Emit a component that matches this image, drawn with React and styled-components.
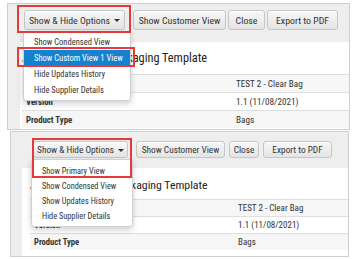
import React from "react";
import styled, { createGlobalStyle } from "styled-components";

const Global = createGlobalStyle`
  html, body { margin: 0; padding: 0; background: #ffffff; }
  body {
    width: 362px; height: 259px; overflow: hidden;
    font-family: "Roboto Condensed", "Liberation Sans", Arial, sans-serif;
    color: #333;
  }
`;

const Page = styled.div`
  display: flex;
  flex-direction: column;
`;

const Shot = styled.div`
  position: relative;
  box-sizing: border-box;
  margin: ${(p) => p.$mt}px 0 0 ${(p) => p.$ml}px;
  width: ${(p) => p.$w}px;
  height: ${(p) => p.$h}px;
  border: 1px solid #cfcfcf;
  background: #eeeeee;
  display: flex;
  flex-direction: column;
  overflow: hidden;
`;

const Toolbar = styled.div`
  height: ${(p) => p.$h}px;
  flex: none;
  display: flex;
  align-items: flex-start;
  padding: ${(p) => p.$pt}px 0 0 ${(p) => p.$pl}px;
  box-sizing: border-box;
`;

const Button = styled.div`
  box-sizing: border-box;
  flex: none;
  width: ${(p) => p.$w}px;
  height: ${(p) => p.$h}px;
  margin-right: ${(p) => p.$gap}px;
  display: flex;
  align-items: center;
  justify-content: center;
  gap: 4px;
  font-size: ${(p) => p.$fs}px;
  color: #333;
  white-space: nowrap;
  border: 1px solid #c6c6c6;
  border-radius: 3px;
  background: linear-gradient(#f7f7f7, #e4e4e4);
  box-shadow: inset 0 1px 0 #fff;
`;

const Caret = styled.span`
  width: 0;
  height: 0;
  border-left: 3px solid transparent;
  border-right: 3px solid transparent;
  border-top: 3.5px solid #333;
  margin-top: 1px;
`;

const Card = styled.div`
  flex: 1;
  margin-left: ${(p) => p.$ml}px;
  background: #ffffff;
  padding: 0 0 0 ${(p) => p.$pl}px;
`;

const Heading = styled.div`
  font-size: ${(p) => p.$fs}px;
  line-height: 16px;
  margin: ${(p) => p.$mt}px 0 ${(p) => p.$mb}px 0;
  color: #222;
  white-space: nowrap;
`;

const Row = styled.div`
  display: grid;
  grid-template-columns: ${(p) => p.$col}px 1fr;
  height: ${(p) => p.$h}px;
  align-items: center;
  border-top: 1px solid #dedede;
  box-sizing: border-box;
  background: ${(p) => (p.$alt ? "#f6f6f6" : "#ffffff")};
`;

const Label = styled.div`
  padding-left: 4px;
  font-size: ${(p) => p.$fs}px;
  font-weight: bold;
  color: #333;
`;

const Value = styled.div`
  padding-left: 4px;
  font-size: ${(p) => p.$fs}px;
  color: #333;
`;

const Menu = styled.div`
  position: absolute;
  left: ${(p) => p.$x}px;
  top: ${(p) => p.$y}px;
  width: ${(p) => p.$w}px;
  box-sizing: border-box;
  padding: ${(p) => p.$pad}px 0;
  background: #ffffff;
  border: 1px solid #d0d0d0;
  border-radius: 3px;
  box-shadow: 0 3px 6px rgba(0, 0, 0, 0.18);
`;

const MenuItem = styled.div`
  height: ${(p) => p.$h}px;
  display: flex;
  align-items: center;
  padding-left: ${(p) => p.$pl}px;
  font-size: ${(p) => p.$fs}px;
  white-space: nowrap;
  color: ${(p) => (p.$active ? "#ffffff" : "#333")};
  background: ${(p) => (p.$active ? "#1482cf" : "transparent")};
`;

const Highlight = styled.div`
  position: absolute;
  left: ${(p) => p.$x}px;
  top: ${(p) => p.$y}px;
  width: ${(p) => p.$w}px;
  height: ${(p) => p.$h}px;
  box-sizing: border-box;
  border: 2px solid #e5393b;
  pointer-events: none;
`;

const buttons = ["Show Customer View", "Close", "Export to PDF"];
const rows = [
  ["Name", "TEST 2 - Clear Bag"],
  ["Version", "1.1 (11/08/2021)"],
  ["Product Type", "Bags"],
];

function Screen({ g, items, activeIndex, boxes }) {
  return (
    <Shot $mt={g.mt} $ml={g.ml} $w={g.w} $h={g.h}>
      <Toolbar $h={g.tbH} $pt={g.tbPt} $pl={g.tbPl}>
        <Button $w={g.btnW[0]} $h={g.btnH} $fs={g.btnFs} $gap={g.firstGap}>
          Show &amp; Hide Options <Caret />
        </Button>
        {buttons.map((b, i) => (
          <Button key={b} $w={g.btnW[i + 1]} $h={g.btnH} $fs={g.btnFs} $gap={g.gap}>
            {b}
          </Button>
        ))}
      </Toolbar>
      <Card $ml={g.cardMl} $pl={g.cardPl}>
        <Heading $fs={g.hFs} $mt={g.hMt} $mb={g.hMb}>
          Article Spec Card Packaging Template
        </Heading>
        {rows.map(([l, v], i) => (
          <Row key={l} $col={g.col} $h={g.rowH} $alt={i !== 1}>
            <Label $fs={g.lFs}>{l}</Label>
            <Value $fs={g.tFs}>{v}</Value>
          </Row>
        ))}
      </Card>
      <Menu $x={g.menuX} $y={g.menuY} $w={g.menuW} $pad={g.menuPad}>
        {items.map((t, i) => (
          <MenuItem key={t} $h={g.itemH} $pl={g.itemPl} $fs={g.mFs} $active={i === activeIndex}>
            {t}
          </MenuItem>
        ))}
      </Menu>
      {boxes.map((b, i) => (
        <Highlight key={i} $x={b[0]} $y={b[1]} $w={b[2]} $h={b[3]} />
      ))}
    </Shot>
  );
}

const topGeo = {
  mt: 3, ml: 7, w: 343, h: 127,
  tbH: 38, tbPt: 6, tbPl: 16,
  btnW: [101, 93, 37, 71], btnH: 20, btnFs: 9.8, firstGap: 8, gap: 2,
  cardMl: 12, cardPl: 2,
  hFs: 12.3, hMt: 8, hMb: 8,
  col: 210, rowH: 18, tFs: 9.2, lFs: 8.8,
  menuX: 15, menuY: 27, menuW: 108, menuPad: 2,
  itemH: 16, itemPl: 10, mFs: 8.5,
};

const bottomGeo = {
  mt: 1, ml: 10, w: 339, h: 126,
  tbH: 36, tbPt: 9, tbPl: 22,
  btnW: [95, 89, 30, 69], btnH: 17, btnFs: 9.3, firstGap: 8, gap: 4,
  cardMl: 11, cardPl: 8,
  hFs: 11.8, hMt: 9, hMb: 6,
  col: 204, rowH: 17, tFs: 9, lFs: 8.6,
  menuX: 20, menuY: 27, menuW: 102, menuPad: 3,
  itemH: 15, itemPl: 10, mFs: 8.3,
};

export default function App() {
  return (
    <Page>
      <Global />
      <Screen
        g={topGeo}
        items={["Show Condensed View", "Show Custom View 1 View", "Hide Updates History", "Hide Supplier Details"]}
        activeIndex={1}
        boxes={[[9, 1, 114, 28], [9, 43, 118, 20]]}
      />
      <Screen
        g={bottomGeo}
        items={["Show Primary View", "Show Condensed View", "Show Updates History", "Hide Supplier Details"]}
        activeIndex={-1}
        boxes={[[21, 6, 100, 40]]}
      />
    </Page>
  );
}
